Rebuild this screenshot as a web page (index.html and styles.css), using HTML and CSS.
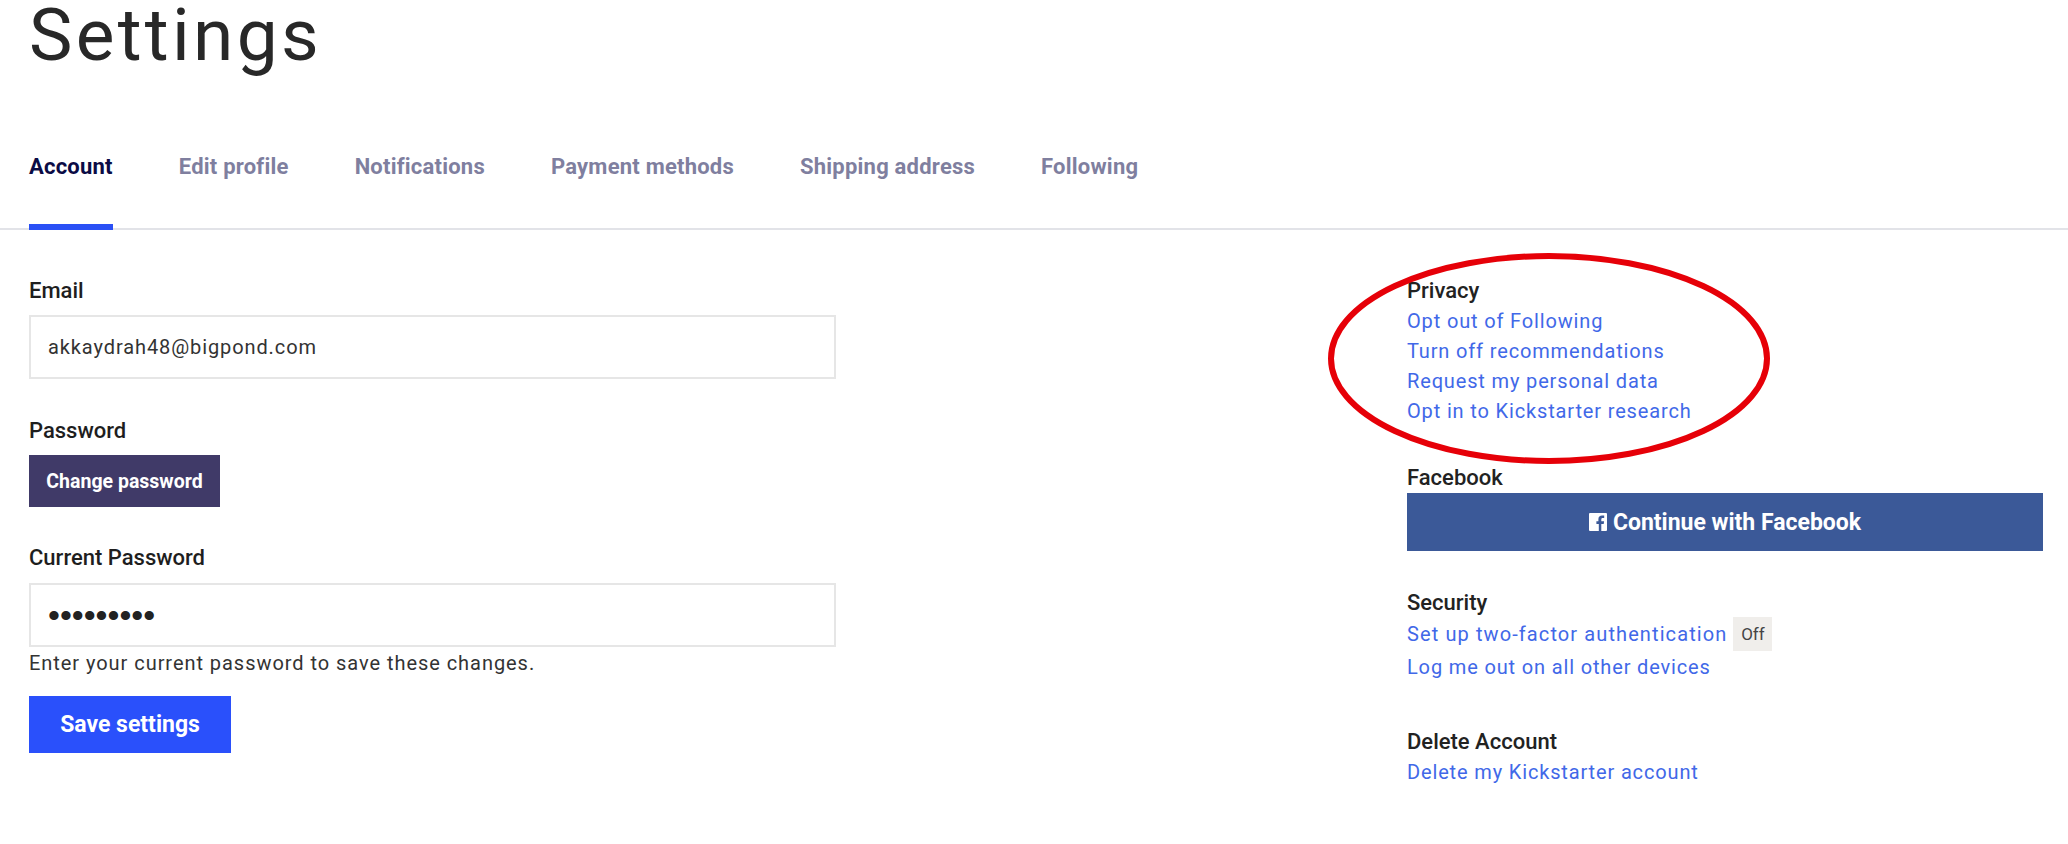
FILE: index.html
```html
<!DOCTYPE html>
<html lang="en">
<head>
<meta charset="utf-8">
<title>Settings</title>
<link rel="stylesheet" href="styles.css">
</head>
<body>
<h1 class="title">Settings</h1>
<nav class="tabs">
  <a class="tab tab-active">Account</a>
  <a class="tab">Edit profile</a>
  <a class="tab">Notifications</a>
  <a class="tab">Payment methods</a>
  <a class="tab">Shipping address</a>
  <a class="tab">Following</a>
</nav>
<main class="content">
  <form class="form">
    <div class="label label-email">Email</div>
    <input class="input" type="text" value="akkaydrah48@bigpond.com">
    <div class="label label-password">Password</div>
    <button class="btn btn-dark" type="button">Change password</button>
    <div class="label label-current">Current Password</div>
    <input class="input input-pass" type="password" value="123456789">
    <div class="help">Enter your current password to save these changes.</div>
    <button class="btn btn-save" type="button">Save settings</button>
  </form>
  <aside class="side">
    <section class="privacy">
      <div class="side-label">Privacy</div>
      <a class="link">Opt out of Following</a>
      <a class="link">Turn off recommendations</a>
      <a class="link">Request my personal data</a>
      <a class="link">Opt in to Kickstarter research</a>
      <svg class="ring" viewBox="0 0 442 211" width="442" height="211" aria-hidden="true">
        <ellipse cx="221" cy="105.500" rx="218" ry="102.500" fill="none" stroke="#e60008" stroke-width="6"/>
      </svg>
    </section>
    <section class="facebook">
      <div class="fb-label">Facebook</div>
      <button class="btn-fb" type="button">
        <svg class="fb-icon" viewBox="0 0 18 18" width="18" height="18" aria-hidden="true">
          <path fill="#fff" d="M1 0h16a1 1 0 0 1 1 1v16a1 1 0 0 1-1 1h-4.700v-7h2.400l.4-2.800h-2.800V6.500c0-.8.300-1.400 1.400-1.400h1.500V2.600c-.3 0-1.200-.1-2.200-.1-2.200 0-3.600 1.300-3.600 3.700v2H7.400V11h2.400v7H1a1 1 0 0 1-1-1V1a1 1 0 0 1 1-1z"/>
        </svg>
        <span>Continue with Facebook</span>
      </button>
    </section>
    <section class="security">
      <div class="side-label">Security</div>
      <div class="row-2fa">
        <a class="link link-wide">Set up two-factor authentication</a>
        <span class="badge">Off</span>
      </div>
      <a class="link">Log me out on all other devices</a>
    </section>
    <section class="delete">
      <div class="side-label">Delete Account</div>
      <a class="link link-delete">Delete my Kickstarter account</a>
    </section>
  </aside>
</main>
</body>
</html>
```
FILE: styles.css
```css
* { box-sizing: border-box; }
html, body { margin: 0; padding: 0; background: #fff; }
body {
  width: 2068px;
  height: 844px;
  overflow: hidden;
  font-family: Roboto, "Liberation Sans", sans-serif;
  color: #222;
}
.title {
  margin: 0;
  padding-left: 29px;
  height: 86px;
  font-size: 73px;
  line-height: 71px;
  font-weight: 400;
  letter-spacing: 3.3px;
  color: #282828;
}
.tabs {
  display: flex;
  gap: 66px;
  height: 144px;
  padding: 0 0 0 29px;
  border-bottom: 2px solid #e2e3e8;
}
.tab {
  position: relative;
  height: 144px;
  padding-top: 67px;
  font-size: 22px;
  line-height: 28px;
  letter-spacing: .22px;
  font-weight: 700;
  color: #7f7f9f;
}
.tab-active { color: #0b0b45; }
.tab-active::after {
  content: "";
  position: absolute;
  left: 0;
  right: 0;
  bottom: 0;
  height: 6px;
  background: #2a50f5;
}
.content {
  display: flex;
  padding-left: 29px;
}
.form {
  width: 1378px;
  display: flex;
  flex-direction: column;
  align-items: flex-start;
}
.label {
  font-size: 22px;
  line-height: 28px;
  font-weight: 500;
  color: #1e1e1e;
}
.label-email { margin-top: 47px; margin-bottom: 10px; }
.label-password { margin-top: 38px; margin-bottom: 10px; }
.label-current { margin-top: 37px; margin-bottom: 11px; }
.input {
  width: 807px;
  height: 64px;
  padding: 0 17px;
  border: 2px solid #e6e6e6;
  border-radius: 0;
  outline: none;
  background: #fff;
  font-family: Roboto, "Liberation Sans", sans-serif;
  font-size: 20px;
  letter-spacing: .9px;
  color: #333;
}
.input-pass {
  font-family: "Liberation Sans", sans-serif;
  font-size: 34px;
  letter-spacing: 0;
  color: #222;
}
.help {
  margin-top: 2px;
  font-size: 20px;
  line-height: 28px;
  letter-spacing: .95px;
  color: #333;
}
.btn {
  display: block;
  border: 0;
  color: #fff;
  font-family: Roboto, "Liberation Sans", sans-serif;
  font-weight: 700;
}
.btn-dark {
  width: 191px;
  height: 52px;
  background: #403a68;
  font-size: 19.500px;
}
.btn-save {
  width: 202px;
  height: 57px;
  margin-top: 19px;
  background: #2a50fb;
  font-size: 23px;
}
.side {
  width: 636px;
  display: flex;
  flex-direction: column;
  align-items: stretch;
}
.side-label, .fb-label {
  font-size: 22px;
  line-height: 28px;
  font-weight: 500;
  color: #222;
}
.link {
  display: block;
  font-size: 20px;
  line-height: 30px;
  letter-spacing: .85px;
  color: #4168e8;
}
.link-wide { letter-spacing: 1.1px; }
.link-delete { margin-top: 1px; }
.privacy {
  position: relative;
  margin-top: 47px;
}
.ring {
  position: absolute;
  left: -79px;
  top: -24px;
}
.privacy .side-label { margin-bottom: 1px; }
.facebook { margin-top: 40px; }
.fb-label { margin-bottom: 3px; line-height: 24px; }
.btn-fb {
  display: flex;
  align-items: center;
  justify-content: center;
  gap: 6px;
  width: 100%;
  height: 58px;
  border: 0;
  background: #3b5998;
  color: #fff;
  font-family: Roboto, "Liberation Sans", sans-serif;
  font-size: 23px;
  font-weight: 700;
}
.security { margin-top: 38px; }
.row-2fa {
  display: flex;
  align-items: center;
  gap: 6px;
  height: 34px;
}
.badge {
  display: flex;
  align-items: center;
  justify-content: center;
  width: 39px;
  height: 34px;
  background: #f0eeeb;
  font-size: 17px;
  color: #454545;
}
.row-2fa + .link { margin-top: 1px; }
.delete { margin-top: 46px; }
```
